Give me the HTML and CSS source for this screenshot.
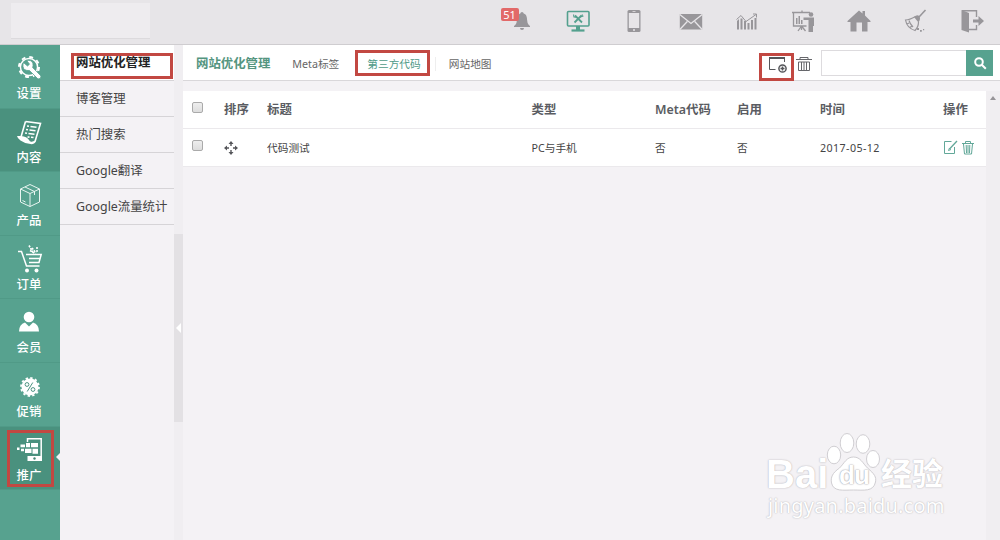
FILE: index.html
```html
<!DOCTYPE html>
<html lang="zh-CN">
<head>
    <meta charset="UTF-8">
    <meta name="viewport" content="width=device-width, initial-scale=1.0">
    <title>网站优化管理</title>
    <link rel="stylesheet" href="styles.css">
</head>
<body>
    <header class="topbar">
        <div class="logo"></div>
        <nav class="top-icons">
            <a class="bell">
                <svg width="18" height="22" viewBox="0 0 18 22"><path fill="#98969a" d="M9 2q1.500 0 1.700 1.500c3 1 3.300 4 3.500 7 .2 3 1 4 2.800 5.500v1H1v-1c2-1.500 2.600-2.500 2.800-5.500.2-3 .6-6 3.500-7Q7.500 2 9 2zM7 18h4q0 2-2 2t-2-2z"/></svg>
                <span class="badge">51</span>
            </a>
            <a>
                <svg width="24" height="24" viewBox="0 0 24 24" fill="none" stroke="#54a08e"><rect x="1.500" y="2.500" width="21.500" height="14.500" rx="1" stroke-width="1.600"/><path d="M9 6.500l7 7M15.500 6.500l-7 7" stroke-width="1.800"/><path d="M7.500 5.500l.5 2.500 2 .2M16.500 5.500l-1 2 2-.5" stroke-width="1.200"/><path d="M12 17v4" stroke-width="4"/><path d="M5.500 21.500h13" stroke-width="2.200"/></svg>
            </a>
            <a>
                <svg width="24" height="24" viewBox="0 0 24 24"><rect x="5.500" y="1" width="13" height="22" rx="1.500" fill="#98969a"/><path fill="#e7e5e8" d="M6.800 4h10.400v15H6.800zM10.500 2h3v.8h-3z"/><circle cx="12" cy="21" r="1" fill="#e7e5e8"/></svg>
            </a>
            <a>
                <svg width="24" height="24" viewBox="0 0 24 24"><path fill="#98969a" d="M.8 5h22.400v15.500H.8z"/><path fill="none" stroke="#e7e5e8" stroke-width="1.300" d="M.8 5.500L12 14.500 23.200 5.500M.8 20.500l7.500-8M23.200 20.500l-7.500-8"/></svg>
            </a>
            <a>
                <svg width="24" height="24" viewBox="0 0 24 24"><path fill="#98969a" d="M2 12l2-2v10.500H2zM5.500 9.500h2v11h-2zM9 12h2v8.500H9zM12.500 14h2v6.500h-2zM16 11h2v9.500h-2zM19.500 9h2v11.500h-2z"/><path fill="none" stroke="#98969a" d="M1.500 10.500L6 6.500l5 6L21 5.500M18 5h3.500v3.500"/></svg>
            </a>
            <a>
                <svg width="24" height="24" viewBox="0 0 24 24"><path fill="none" stroke="#98969a" stroke-width="1.300" d="M1 3.500h18M2.500 4v13h13M11 1.500v2M10.500 17L7 22M10.500 17l4 5M10.500 17v4"/><path fill="#98969a" d="M5 9h1.500v6H5zM7.500 7H9v8H7.500zM10 11h1.500v4H10zM12.500 8.500H23V17h-1v6h-4.500V11h-5z"/><circle cx="20" cy="5.500" r="2.300" fill="#98969a"/></svg>
            </a>
            <a>
                <svg width="24" height="24" viewBox="0 0 24 24"><path fill="#98969a" d="M12 1.500l3.500 3V2H18v4.500l5.500 5.500v1h-3v9.500H15v-9H9.500v9H3.500V13h-3v-1z"/></svg>
            </a>
            <a>
                <svg width="24" height="24" viewBox="0 0 24 24"><path fill="none" stroke="#98969a" stroke-width="1.200" d="M11.500 7.500C8 9.500 5 11 1.500 11c1 5.500 4.500 9 9.500 10.500 2.500-2.500 3.500-5 3.500-8.500M5 11.500c.5 2 2 4.500 4 6.500M3 15l2-1M6 18.500l2-1.500"/><path fill="#98969a" d="M10 8q3-3 5.200-1 2 2.500-.7 6.500z"/><path stroke="#98969a" stroke-width="1.600" d="M15 8L21.500 1"/><path fill="#98969a" d="M13 19h2v2h-2zM16 21h1.800v1.800H16zM19 20h1.200v1.200H19z"/></svg>
            </a>
            <a>
                <svg width="24" height="24" viewBox="0 0 24 24"><path fill="#98969a" d="M1.500 1L9 4v19.500L1.500 21zM13 10.500h5.500V7L24 12l-5.500 5v-3.500H13z"/><path fill="none" stroke="#98969a" stroke-width="1.400" d="M2 1.800h14.500V8M16.500 16v4.500H9"/></svg>
            </a>
        </nav>
    </header>

    <div class="layout">
        <nav class="sidebar">
            <a class="side-item">
                <svg viewBox="0 0 26 28"><circle cx="12" cy="13" r="8.600" fill="none" stroke="#fff" stroke-width="1.500"/><circle cx="12" cy="13" r="10" fill="none" stroke="#fff" stroke-width="2" stroke-dasharray="3.850 4"/><path fill="#fff" stroke="#57a28f" stroke-width=".8" d="M6.500 8.500l4 3.500 2-1.800-2.800-3.700q5-1 6.200 3 .5 2.500-.3 4l8.400 8.500q.3 3-3 3l-8.500-8.500q-6 .5-6.500-4-.2-2 .5-4z"/></svg>
                <span>设置</span>
            </a>
            <a class="side-item active">
                <svg viewBox="0 0 26 28" fill="none" stroke="#fff"><path stroke-width="1.600" d="M8.500 3.500l15 2-5.500 18M8.500 3.500L4 19"/><path fill="#fff" stroke="none" d="M0 18h4q6 .5 8 4 1 2.500 3.500 1.500 3-.5 3.800-2-1 5.500-5.800 4.500-6-.5-10-3.500Q.5 20.500 0 18z"/><path stroke-width="1.600" stroke-dasharray="2 1.500 7" d="M10 8l9.500 1.300M9 11.500l9.500 1.300M8 15l9.500 1.300M10.500 19l6 .5"/></svg>
                <span>内容</span>
            </a>
            <a class="side-item">
                <svg viewBox="0 0 26 28" fill="none" stroke="#e9f5f1"><path d="M3.500 8L13 3.500 22.500 8v13L13 25.500 3.500 21zM3.500 8l9.500 4.500L22.500 8M13 12.500v13M8 6l9.500 4.500V14M5.500 19.500l3 1.500"/></svg>
                <span>产品</span>
            </a>
            <a class="side-item">
                <svg viewBox="0 0 26 28" fill="none" stroke="#fff"><path stroke-width="1.500" d="M1 6.500h3.500l5 14.500h13M9 9.500h15.200L22 17.500H12M12 13.500h11"/><path stroke-width="1.600" stroke-dasharray="2 1" d="M12 .5l4 7M15 3l4 5M20 2v5M13 5.500l5 3"/><circle cx="10" cy="25.500" r="2" fill="#fff" stroke="none"/><circle cx="19.500" cy="25.500" r="2" fill="#fff" stroke="none"/></svg>
                <span>订单</span>
            </a>
            <a class="side-item">
                <svg viewBox="0 0 26 28" fill="#fff"><circle cx="12" cy="9" r="5.300"/><path d="M2 23.500q0-7 6-9l4 4 4-4q6 2 6 9z"/></svg>
                <span>会员</span>
            </a>
            <a class="side-item">
                <svg viewBox="0 0 26 28"><circle cx="13" cy="15" r="8.500" fill="#fff"/><circle cx="13" cy="15" r="9" fill="none" stroke="#fff" stroke-width="1.800" stroke-dasharray="2.350 2.362"/><g fill="none" stroke="#4d9482"><circle cx="10" cy="12.500" r="1.900"/><circle cx="16" cy="17.500" r="1.900"/><path d="M15.800 10.500l-5.600 9"/></g></svg>
                <span>促销</span>
            </a>
            <a class="side-item active current">
                <svg viewBox="0 0 26 28"><path fill="none" stroke="#fff" stroke-width="1.500" d="M10.500 6V2.800h13.700V24"/><path fill="#fff" d="M10.500 20H25v5H10.500zM14 7h7v4.300h-7zM9 7h4v4.300H9zM3.500 8.500H8v2.800H3.500zM8 12.700h6.500v4.300H8zM15.500 12.700H21v5h-5.500zM4 12.700h3v2.500H4zM0 11.500h2.500V14H0z"/><circle cx="17.500" cy="22.500" r="1.200" fill="#448673"/></svg>
                <span>推广</span>
                <i class="mark mark-side"></i>
            </a>
        </nav>

        <nav class="submenu">
            <a class="selected">网站优化管理<i class="mark mark-sub"></i></a>
            <a>博客管理</a>
            <a>热门搜索</a>
            <a>Google翻译</a>
            <a>Google流量统计</a>
        </nav>
        <div class="splitter"><div class="handle"></div></div>

        <main class="main">
            <div class="toolbar">
                <h1>网站优化管理</h1>
                <a class="tab">Meta标签</a>
                <a class="tab on">第三方代码<i class="mark mark-tab"></i></a>
                <a class="tab last">网站地图</a>
                <div class="tools">
                    <a class="add">
                        <svg width="19" height="18" viewBox="0 0 19 18" fill="none" stroke="#55565a"><path d="M6.500 13.500h-6v-12h15V6"/><path stroke-width="2" d="M0 2h16"/><circle cx="13.500" cy="12.500" r="3.600" stroke-width="1.500"/><path d="M13.500 10.500v4M11.500 12.500h4" stroke-width="1.500"/></svg>
                        <i class="mark mark-add"></i>
                    </a>
                    <svg class="bin" width="16" height="16" viewBox="0 0 16 16" fill="none" stroke="#66676b"><path d="M0 3.500h16M4 3V1.500h8V3M2.500 6h11v8.500h-11zM5.500 6v8M8 6v8M10.500 6v8"/></svg>
                    <div class="search">
                        <input type="text">
                        <button type="button"><svg width="14" height="14" viewBox="0 0 14 14" fill="none" stroke="#fff" stroke-width="2"><circle cx="6" cy="6" r="3.800"/><path d="M8.800 8.800l4 4"/></svg></button>
                    </div>
                </div>
            </div>
            <div class="content">
                <div class="table">
                    <div class="row head">
                        <span><i class="check"></i></span><span>排序</span><span>标题</span><span>类型</span><span>Meta代码</span><span>启用</span><span>时间</span><span>操作</span>
                    </div>
                    <div class="row">
                        <span><i class="check"></i></span>
                        <span><svg width="14" height="14" viewBox="0 0 14 14" fill="#55565a"><path d="M7 0l2.500 3H7.700v2H6.300V3H4.500zM7 14l2.500-3H7.700V9H6.300v2H4.500zM0 7l3-2.500v1.800h2v1.400H3v1.800zM14 7l-3-2.500v1.800H9v1.400h2v1.800z"/></svg></span>
                        <span>代码测试</span><span>PC与手机</span><span>否</span><span>否</span><span class="date">2017-05-12</span>
                        <span class="ops">
                            <svg width="15" height="15" viewBox="0 0 15 15" fill="none" stroke="#62a899"><path d="M8.500 1.500h-7v12h10V7"/><path stroke-width="1.300" d="M14 1L6.500 9"/><path d="M6.500 8l-1 2.500L8 9.500"/></svg>
                            <svg width="12" height="15" viewBox="0 0 12 15" fill="none" stroke="#62a899"><path d="M0 3.500h12M3.500 3V1.500h5V3M1.500 4l1 10h7l1-10M4.200 5l.3 8M6 5v8M7.800 5l-.3 8"/></svg>
                        </span>
                    </div>
                </div>
                <div class="scrollbar"></div>
            </div>
        </main>
    </div>

    <div class="watermark">
        <div class="wm-logo">
            <span class="wm-bold">Bai</span>
            <div class="paw">
                <svg width="56" height="62" viewBox="0 0 56 62" fill="#fff" stroke="#d0ced2"><ellipse cx="10" cy="25" rx="6.700" ry="8.800"/><ellipse cx="23" cy="13" rx="6.800" ry="9.500"/><ellipse cx="39" cy="14" rx="6.800" ry="9.300"/><ellipse cx="49" cy="29" rx="6.500" ry="8.500"/><path d="M29.500 27c7 0 9 6 14 11 7 6 9 9 8 14-2 10-12 8-22 8s-20 2-22-7c-1-6 1-10 8-15 5-5 7-11 14-11z"/></svg>
                <span class="wm-du">du</span>
            </div>
            <span class="wm-cn">经验</span>
        </div>
        <div class="wm-url">jingyan.baidu.com</div>
    </div>
</body>
</html>
```
FILE: styles.css
```css
* {
    margin: 0;
    padding: 0;
    box-sizing: border-box;
}

body {
    font-family: "Noto Sans", "Noto Sans CJK SC", sans-serif;
    font-size: 12.4px;
    background: #f4f2f5;
    color: #444;
    height: 540px;
    overflow: hidden;
    position: relative;
}

svg {
    display: block;
}

.topbar {
    height: 45px;
    display: flex;
    justify-content: space-between;
    background: #e7e5e8;
    border-bottom: 1px solid #cfcdd0;
}

.logo {
    width: 139px;
    height: 36px;
    margin: 3px 0 0 11px;
    background: #eeecef;
    border-bottom: 1px solid #dcdadd;
}

.top-icons {
    display: flex;
    align-items: center;
    gap: 32.3px;
    padding: 0 16px 2px 0;
}

.top-icons a {
    width: 24px;
    display: flex;
    justify-content: center;
    position: relative;
}

.badge {
    position: absolute;
    left: -9px;
    top: -2px;
    width: 18px;
    height: 13px;
    border-radius: 2px;
    background: #e26969;
    color: #fff;
    font-size: 11px;
    line-height: 13px;
    text-align: center;
}

.layout {
    display: flex;
    height: 495px;
}

.sidebar {
    width: 60px;
    background: #57a28f;
}

.side-item {
    height: 63.6px;
    display: flex;
    flex-direction: column;
    align-items: center;
    padding-top: 9px;
    border-bottom: 1px solid #509a87;
    color: #fff;
    font-weight: 500;
    line-height: 17px;
    position: relative;
}

.side-item svg {
    width: 26px;
    height: 28px;
    margin-bottom: 3px;
}

.side-item span {
    padding-right: 2px;
}

.side-item.active {
    background: #4a917e;
}

.side-item.current::after {
    content: "";
    position: absolute;
    right: 0;
    top: 26px;
    border: 4px solid transparent;
    border-left: 0;
    border-right-color: #f4f2f5;
}

/* red frames around the clicked places */
.mark {
    position: absolute;
    border: 3px solid #c24842;
}

.mark-side {
    left: 7px;
    top: 3px;
    width: 47px;
    height: 57px;
}

.mark-sub {
    left: 11px;
    top: 8px;
    width: 102px;
    height: 26px;
}

.mark-tab {
    left: -12px;
    top: -7px;
    width: 75px;
    height: 26px;
}

.mark-add {
    left: -10px;
    top: -3px;
    width: 35px;
    height: 28px;
}

.submenu {
    width: 114px;
}

.submenu a {
    display: block;
    height: 36px;
    padding-left: 16px;
    line-height: 36px;
    border-bottom: 1px solid #d6d4d7;
    white-space: nowrap;
    position: relative;
}

.submenu .selected {
    background: #fff;
    color: #222;
    font-weight: bold;
}

.splitter {
    width: 9px;
    background: #f0eef1;
    padding-top: 189px;
}

.handle {
    height: 188px;
    background: #e3e1e4;
    display: flex;
    align-items: center;
    justify-content: center;
}

.handle::before {
    content: "";
    border: 5px solid transparent;
    border-left: 0;
    border-right-color: #fff;
}

.main {
    flex: 1;
    display: flex;
    flex-direction: column;
}

.toolbar {
    height: 36px;
    display: flex;
    align-items: center;
    padding: 0 7px 0 13px;
    background: #fff;
    border-bottom: 1px solid #d9d7da;
}

.toolbar h1 {
    font-size: 12.4px;
    color: #54957f;
    margin-right: 22px;
}

.tab {
    position: relative;
    font-size: 10.7px;
    line-height: 14px;
    color: #666;
    margin: 2px 28px 0 0;
}

.tab.on {
    color: #4f9a88;
    margin-right: 14px;
}

.tab.last {
    border-left: 1px solid #eee;
    padding-left: 13px;
}

.tools {
    margin-left: auto;
    display: flex;
    align-items: center;
}

.add {
    position: relative;
    margin: 4px 8px 0 0;
}

.bin {
    margin: 3px 9px 0 0;
}

.search {
    display: flex;
}

.search input {
    width: 145px;
    height: 26px;
    border: 1px solid #dddbde;
    border-right: 0;
    outline: none;
}

.search button {
    width: 27px;
    height: 26px;
    border: 0;
    background: #57a28f;
    display: flex;
    align-items: center;
    justify-content: center;
}

.content {
    flex: 1;
    display: flex;
    padding-top: 10px;
}

.table {
    width: 803px;
}

.row {
    display: grid;
    grid-template-columns: 32px 43px 264.5px 123.5px 82px 83px 123px 1fr;
    align-items: center;
    height: 38px;
    padding-left: 9px;
    background: #fff;
    border-bottom: 1px solid #ebe9ec;
    font-size: 10.7px;
}

.row.head {
    font-size: 12.4px;
    font-weight: 600;
    color: #5a5c62;
    padding-bottom: 1px;
}

.row span svg {
    display: inline-block;
    vertical-align: middle;
}

.row .date {
    letter-spacing: 0.4px;
}

.row .ops {
    display: flex;
    gap: 4px;
}

.check {
    display: block;
    width: 11px;
    height: 11px;
    margin-bottom: 4px;
    border: 1px solid #aaa;
    border-radius: 2px;
    background: linear-gradient(#eee, #ddd);
}

.scrollbar {
    flex: 1;
    background: #f0eef1;
    padding: 5px 0 0 4px;
}

.scrollbar::before {
    content: "";
    display: block;
    width: 0;
    border: 3.5px solid transparent;
    border-top: 0;
    border-bottom: 4px solid #969498;
}

.watermark {
    position: absolute;
    left: 766px;
    top: 430px;
    color: #fff;
    white-space: nowrap;
    text-shadow: 0 0 1px #bbb9bd, 0 0 2px #c8c6ca;
}

.wm-logo {
    display: flex;
    align-items: flex-end;
    height: 62px;
}

.wm-bold {
    width: 60px;
    font: bold 40px/36px "Liberation Sans", sans-serif;
}

.paw {
    position: relative;
    margin-left: -2px;
}

.wm-du {
    position: absolute;
    left: 15px;
    top: 31px;
    font: bold 26px/28px "Liberation Sans", sans-serif;
    letter-spacing: -1px;
    text-shadow: 0 0 1px #a5a3a8, 0 0 2px #aaa8ad;
}

.wm-cn {
    margin-left: 1px;
    font: bold 31px/40px "Noto Sans CJK SC", sans-serif;
}

.wm-url {
    margin: 3px 0 0 2px;
    font-size: 20px;
    line-height: 22px;
    letter-spacing: 0.2px;
}
```
